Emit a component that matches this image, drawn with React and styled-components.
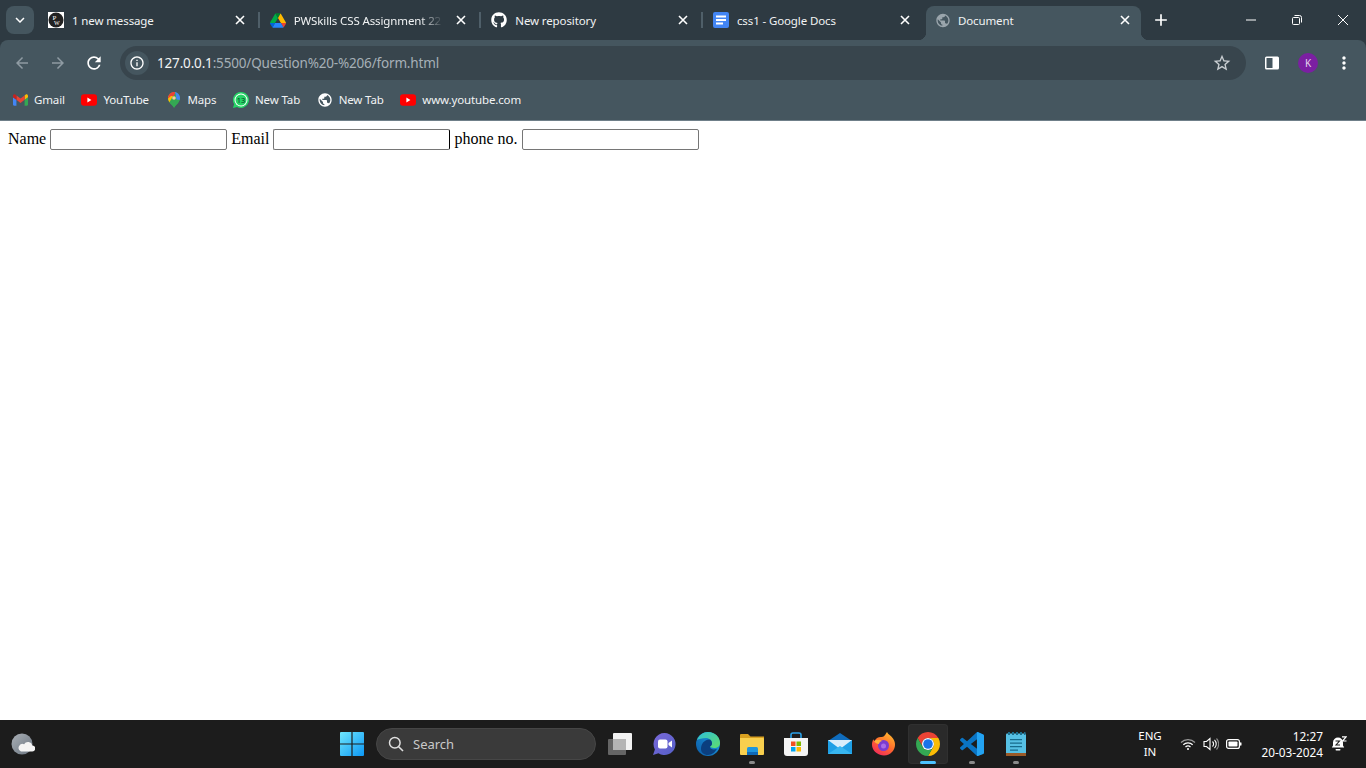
import React from "react";
import styled, { createGlobalStyle } from "styled-components";
import {
  MdArrowBack,
  MdArrowForward,
  MdRefresh,
  MdInfoOutline,
  MdStarBorder,
  MdMoreVert,
  MdKeyboardArrowDown,
  MdPublic,
  MdAdd,
} from "react-icons/md";
import { FaGithub } from "react-icons/fa";

const STRIP = "#2e3a42";
const TOOLBAR = "#45565f";
const UI_FONT = `"Noto Sans", "Open Sans", sans-serif`;

const GlobalStyle = createGlobalStyle`
  html, body {
    margin: 0;
    height: 100%;
    background: #fff;
    overflow: hidden;
  }
  #root {
    height: 100%;
  }
`;

const Screen = styled.div`
  display: flex;
  flex-direction: column;
  height: 768px;
`;

const BrowserFrame = styled.header`
  background: ${STRIP};
  font-family: ${UI_FONT};
  color: #f1f3f4;
`;

const TabStrip = styled.div`
  display: flex;
  height: 40px;
  padding-top: 6px;
  box-sizing: border-box;
`;

const TabSearch = styled.button`
  width: 28px;
  height: 28px;
  margin: 0 2px 0 6px;
  padding: 0;
  border: 0;
  border-radius: 8px;
  background: ${TOOLBAR};
  color: #fff;
  display: flex;
  align-items: center;
  justify-content: center;
`;

const Tab = styled.div`
  position: relative;
  display: flex;
  align-items: center;
  flex: none;
  box-sizing: border-box;
  width: ${(p) => (p.$active ? "215px" : "221.67px")};
  height: 34px;
  margin-left: ${(p) => (p.$active ? "3.3px" : "0")};
  padding: ${(p) => (p.$active ? "0 10px 6px 9px" : "0 12px 6px 12px")};
  border-radius: 8px 8px 0 0;
  background: ${(p) => (p.$active ? TOOLBAR : "transparent")};

  ${(p) =>
    p.$active
      ? `
    &::before, &::after {
      content: "";
      position: absolute;
      bottom: 0;
      width: 8px;
      height: 8px;
    }
    &::before {
      left: -8px;
      background: radial-gradient(circle at 0 0, transparent 8px, ${TOOLBAR} 8.5px);
    }
    &::after {
      right: -8px;
      background: radial-gradient(circle at 100% 0, transparent 8px, ${TOOLBAR} 8.5px);
    }
  `
      : ""}
`;

const TabDivider = styled.span`
  position: absolute;
  right: -2px;
  top: 6px;
  width: 2px;
  height: 16px;
  background: #4f5f69;
`;

const TabIcon = styled.span`
  flex: none;
  width: 16px;
  height: 16px;
  display: flex;
  align-items: center;
  justify-content: center;
  margin-right: ${(p) => (p.$active ? "7px" : "8px")};
`;

const TabTitle = styled.span`
  flex: 1;
  min-width: 0;
  overflow: hidden;
  white-space: nowrap;
  font-size: 11.5px;
  line-height: 16px;
  padding-top: 2px;
  letter-spacing: -0.12px;
  margin-right: 12px;
  ${(p) =>
    p.$fade
      ? `mask-image: linear-gradient(to right, #000 85%, transparent 100%);`
      : ""}
`;

const TabClose = styled.span`
  flex: none;
  width: 12px;
  height: 12px;
  display: flex;
`;

const NewTab = styled.button`
  width: 28px;
  height: 28px;
  margin-left: 6px;
  padding: 0;
  border: 0;
  background: none;
  color: #fff;
  display: flex;
  align-items: center;
  justify-content: center;
`;

const WindowControls = styled.div`
  display: flex;
  margin-left: auto;
  margin-top: -6px;
`;

const WindowButton = styled.span`
  width: 46px;
  height: 40px;
  display: flex;
  align-items: center;
  justify-content: center;
`;

const Toolbar = styled.div`
  display: flex;
  align-items: flex-start;
  height: 40px;
  box-sizing: border-box;
  padding: 6px 4px 0;
  background: ${TOOLBAR};
  border-radius: 8px 8px 0 0;
`;

const ToolButton = styled.span`
  flex: none;
  width: 36px;
  height: 34px;
  display: flex;
  align-items: center;
  justify-content: center;
  color: ${(p) => (p.$dim ? "#8f9ba3" : "#fff")};
`;

const UrlBar = styled.div`
  flex: 1;
  display: flex;
  align-items: center;
  height: 34px;
  margin: 0 8px;
  padding: 0 14px 0 5px;
  border-radius: 17px;
  background: #38454d;
`;

const SiteChip = styled.span`
  width: 24px;
  height: 24px;
  border-radius: 50%;
  margin-right: 8px;
  background: ${TOOLBAR};
  display: flex;
  align-items: center;
  justify-content: center;
  color: #fff;
`;

const UrlText = styled.span`
  font-size: 13.5px;
  letter-spacing: -0.17px;
  color: #a6b0b7;
  b {
    font-weight: 400;
    color: #f1f3f4;
  }
`;

const StarSlot = styled.span`
  margin-left: auto;
  display: flex;
  color: #c9ced2;
`;

const Avatar = styled.span`
  width: 20px;
  height: 20px;
  border-radius: 50%;
  background: #7b1fa2;
  color: #e6d5ee;
  font-size: 10px;
  line-height: 20px;
  text-align: center;
`;

const BookmarkBar = styled.nav`
  display: flex;
  align-items: center;
  box-sizing: border-box;
  height: 41px;
  padding-left: 4px;
  background: ${TOOLBAR};
  border-bottom: 1px solid #6f7f89;
`;

const Bookmark = styled.span`
  display: flex;
  align-items: center;
  padding: 0 8.6px 0 8px;
  font-size: 11.5px;
  letter-spacing: -0.14px;
  color: #f1f3f4;
`;

const BookmarkIcon = styled.span`
  flex: none;
  width: 16px;
  height: 16px;
  margin-right: 6px;
  display: flex;
  align-items: center;
  justify-content: center;
  color: #fff;
`;

const BookmarkLabel = styled.span`
  margin-top: -1px;
`;

const Page = styled.main`
  flex: 1;
  padding: 8px;
  background: #fff;
  color: #000;
  font-family: "Liberation Serif", "Times New Roman", serif;
  font-size: 16px;
`;

const Field = styled.input`
  box-sizing: border-box;
  width: 177px;
  height: 21px;
  padding: 1px 2px;
  border: 1px solid #767676;
  border-right-color: ${(p) => (p.$focusEdge ? "#000" : "#767676")};
  border-radius: 2px;
  background: #fff;
`;

const Taskbar = styled.footer`
  display: flex;
  align-items: center;
  flex: none;
  height: 48px;
  background: #1c1c1c;
  font-family: ${UI_FONT};
  color: #fff;
`;

const WeatherSlot = styled.div`
  flex: none;
  width: 340px;
  box-sizing: border-box;
  padding-left: 11px;
  display: flex;
`;

const StartSlot = styled.div`
  flex: none;
  width: 24px;
  margin-right: 12px;
  display: flex;
`;

const SearchBox = styled.div`
  flex: none;
  display: flex;
  align-items: center;
  box-sizing: border-box;
  width: 220px;
  height: 32px;
  margin-right: 2px;
  padding-left: 11px;
  border: 1px solid #464646;
  border-radius: 16px;
  background: #3a3a3a;
  color: #c9c9c9;
  font-size: 13px;
  gap: 9px;
`;

const Dock = styled.div`
  display: flex;
`;

const DockSlot = styled.div`
  position: relative;
  width: 44px;
  height: 48px;
  display: flex;
  align-items: center;
  justify-content: center;
`;

const DockTile = styled.div`
  width: 40px;
  height: 40px;
  display: flex;
  align-items: center;
  justify-content: center;
  border-radius: 4px;
  background: ${(p) => (p.$active ? "#2a2a2a" : "transparent")};
  box-shadow: ${(p) => (p.$active ? "inset 0 0 0 1px #303030" : "none")};
`;

const RunDot = styled.span`
  position: absolute;
  bottom: 4px;
  left: 50%;
  transform: translateX(-50%);
  height: 3px;
  width: ${(p) => (p.$active ? "16px" : "6px")};
  border-radius: 2px;
  background: ${(p) => (p.$active ? "#4cc2ff" : "#8a8a8a")};
`;

const Tray = styled.div`
  flex: none;
  display: flex;
  align-items: center;
  box-sizing: border-box;
  width: 236px;
  margin-left: auto;
  padding-right: 19px;
`;

const Lang = styled.div`
  width: 40px;
  margin-right: 10px;
  text-align: center;
  font-size: 11.5px;
  line-height: 16px;
`;

const TrayIcons = styled.div`
  display: flex;
  align-items: center;
  gap: 7px;
`;

const Clock = styled.div`
  margin-left: auto;
  text-align: right;
  font-size: 11.8px;
  line-height: 16px;
`;

const BellSlot = styled.div`
  margin-left: 8px;
  display: flex;
`;

const CloseGlyph = () => (
  <svg width="12" height="12" viewBox="0 0 12 12">
    <path d="M2 2l8 8M10 2l-8 8" stroke="#fff" strokeWidth="1.6" fill="none" />
  </svg>
);

const PwLogo = () => (
  <svg width="16" height="16" viewBox="0 0 16 16">
    <rect width="16" height="16" fill="#fff" />
    <circle cx="8" cy="8" r="7.5" fill="#222" />
    <text x="4.5" y="7.5" fontSize="7" fill="#fff" fontFamily="Liberation Serif">P</text>
    <text x="6" y="13.2" fontSize="6" fill="#fff" fontFamily="Liberation Serif">W</text>
  </svg>
);

const DriveLogo = () => (
  <svg width="16" height="15" viewBox="0 0 87.3 78">
    <path d="m6.6 66.85 3.85 6.65c.8 1.4 1.95 2.5 3.3 3.3l13.75-23.8h-27.5c0 1.55.4 3.1 1.2 4.5z" fill="#0066da" />
    <path d="m43.65 25-13.75-23.8c-1.35.8-2.5 1.9-3.3 3.3l-25.4 44a9.06 9.06 0 0 0 -1.2 4.5h27.5z" fill="#00ac47" />
    <path d="m73.55 76.8c1.35-.8 2.5-1.9 3.3-3.3l1.6-2.75 7.65-13.25c.8-1.4 1.2-2.95 1.2-4.5h-27.502l5.852 11.5z" fill="#ea4335" />
    <path d="m43.65 25 13.75-23.8c-1.35-.8-2.9-1.2-4.5-1.2h-18.5c-1.6 0-3.15.45-4.5 1.2z" fill="#00832d" />
    <path d="m59.8 53h-32.3l-13.75 23.8c1.35.8 2.9 1.2 4.5 1.2h50.8c1.6 0 3.15-.45 4.5-1.2z" fill="#2684fc" />
    <path d="m73.4 26.5-12.7-22c-.8-1.4-1.95-2.5-3.3-3.3l-13.75 23.8 16.15 28h27.45c0-1.55-.4-3.1-1.2-4.5z" fill="#ffba00" />
  </svg>
);

const DocsLogo = () => (
  <svg width="16" height="16" viewBox="0 0 16 16">
    <rect width="16" height="16" rx="2" fill="#4285f4" />
    <path d="M3 3.500h10v2H3zM3 7h10v2H3zM3 10.500h7v2H3z" fill="#fff" />
  </svg>
);

const GmailLogo = () => (
  <svg width="15" height="12" viewBox="52 42 88 66">
    <path fill="#4285f4" d="M58 108h14V74L52 59v43c0 3.32 2.69 6 6 6" />
    <path fill="#34a853" d="M120 108h14c3.32 0 6-2.69 6-6V59l-20 15" />
    <path fill="#fbbc04" d="M120 48v26l20-15v-8c0-7.42-8.47-11.65-14.4-7.2" />
    <path fill="#ea4335" d="M72 74V48l24 18 24-18v26L96 92" />
    <path fill="#c5221f" d="M52 51v8l20 15V48l-5.6-4.2c-5.94-4.45-14.4-.22-14.4 7.2" />
  </svg>
);

const YouTubeLogo = () => (
  <svg width="16" height="12" viewBox="0 0 16 12">
    <rect width="16" height="11.5" y="0.2" rx="3" fill="#f00" />
    <path d="M6.4 3.6v4.8L10.4 6z" fill="#fff" />
  </svg>
);

const MapsLogo = () => (
  <svg width="12" height="16" viewBox="0 0 12 16">
    <clipPath id="maps-pin">
      <path d="M6 0C2.7 0 0 2.700 0 6c0 1.600.6 3 1.400 4.200C2.800 12.200 5 13.600 6 16c1-2.400 3.200-3.800 4.600-5.800C11.400 9 12 7.600 12 6c0-3.300-2.700-6-6-6z" />
    </clipPath>
    <g clipPath="url(#maps-pin)">
      <rect width="12" height="16" fill="#34a853" />
      <path d="M0 4h5L1 11H0z" fill="#fbbc04" />
      <path d="M0 0h7.500L6 4H3L0 6.500z" fill="#ea4335" />
      <path d="M7 0h5v8H8.500L8 4z" fill="#4285f4" />
      <path d="M1 11l4-3.500h3.500l3.500.5-5 8z" fill="#34a853" />
    </g>
    <circle cx="6" cy="6" r="1.800" fill="#f1c9a0" />
  </svg>
);

const WhatsAppBadge = () => (
  <svg width="16" height="16" viewBox="0 0 16 16">
    <path d="M8 0a8 8 0 1 1-3.900 15L0 16l1.100-3.900A8 8 0 0 1 8 0z" fill="#25d366" />
    <circle cx="8" cy="8" r="6.500" fill="#fff" />
    <circle cx="8" cy="8" r="5.500" fill="#25d366" />
    <text x="8" y="10.800" textAnchor="middle" fontSize="7.500" fill="#07361c" fontFamily="Noto Sans">13</text>
  </svg>
);

const WeatherIcon = () => (
  <svg width="24" height="24" viewBox="0 0 24 24">
    <defs>
      <linearGradient id="moon" x1="0" y1="0" x2="1" y2="1">
        <stop offset="0" stopColor="#aab0b6" />
        <stop offset="1" stopColor="#6a7480" />
      </linearGradient>
    </defs>
    <circle cx="11" cy="12" r="10.500" fill="url(#moon)" />
    <path d="M10 19.500h11a3 3 0 0 0 .4-6 4.500 4.500 0 0 0-8.300-1.200A3.700 3.700 0 0 0 10 19.500z" fill="#f4f4f4" />
  </svg>
);

const WindowsLogo = () => (
  <svg width="24" height="24" viewBox="0 0 24 24">
    <defs>
      <linearGradient id="win" x1="0" y1="0" x2="1" y2="1">
        <stop offset="0" stopColor="#6fe6fc" />
        <stop offset="1" stopColor="#0c97f5" />
      </linearGradient>
    </defs>
    <path d="M0 1a1 1 0 0 1 1-1h10.400v11.400H0zM12.600 0H23a1 1 0 0 1 1 1v10.400H12.600zM0 12.600h11.400V24H1a1 1 0 0 1-1-1zM12.600 12.600H24V23a1 1 0 0 1-1 1H12.600z" fill="url(#win)" />
  </svg>
);

const SearchGlyph = () => (
  <svg width="16" height="16" viewBox="0 0 16 16">
    <circle cx="6.800" cy="6.800" r="5.300" stroke="#e0e0e0" strokeWidth="1.500" fill="none" />
    <path d="M10.700 10.700L15 15" stroke="#e0e0e0" strokeWidth="1.600" />
  </svg>
);

const TaskView = () => (
  <svg width="24" height="24" viewBox="0 0 24 24">
    <rect x="5" y="1" width="19" height="17" rx="1" fill="#f2f2f2" />
    <rect x="0" y="7" width="18" height="16" rx="1" fill="#6b6b6b" fillOpacity="0.92" />
    <rect x="5" y="7" width="13" height="11" fill="#b4b4b4" />
  </svg>
);

const MeetIcon = () => (
  <svg width="24" height="24" viewBox="0 0 24 24">
    <defs>
      <linearGradient id="meet" x1="0" y1="0" x2="1" y2="1">
        <stop offset="0" stopColor="#7a68d8" />
        <stop offset="1" stopColor="#5560c8" />
      </linearGradient>
    </defs>
    <path d="M12.500 1a11 11 0 1 1-6 20.200L1 23l1.900-5.600A11 11 0 0 1 12.500 1z" fill="url(#meet)" />
    <rect x="6" y="7.500" width="9.500" height="9" rx="2" fill="#fff" />
    <path d="M16.500 11l3.500-2.500v7L16.500 13z" fill="#fff" />
  </svg>
);

const EdgeIcon = () => (
  <svg width="24" height="24" viewBox="0 0 24 24">
    <defs>
      <linearGradient id="edge-a" x1="0" y1="1" x2="1" y2="0.2">
        <stop offset="0" stopColor="#0c59a4" />
        <stop offset="1" stopColor="#1b9de2" />
      </linearGradient>
      <linearGradient id="edge-b" x1="0" y1="0" x2="1" y2="1">
        <stop offset="0" stopColor="#2fc0d8" />
        <stop offset="1" stopColor="#5fdc6c" />
      </linearGradient>
    </defs>
    <circle cx="12" cy="12" r="12" fill="url(#edge-a)" />
    <path d="M1 8C3 3 7 0 12 0c7 0 12 5 12 11 0 3-2.500 5-6 5-2 0-3.500-.6-4-1.400 1.300-.8 2-2 2-3.300C16 8.500 13.500 6 10 6 6 6 3 7 1 8z" fill="url(#edge-b)" />
    <path d="M5 17c0-5 3-9 8-9.500 2 0 3 2 3 4 0 1.200-.7 2.300-2 3-.5 2 2 3 4 3 1 0 2-.2 3-.7-2 3.800-5.500 6.200-9 6.200-4 0-7-2.500-7-6z" fill="#0b3f7f" />
  </svg>
);

const ExplorerIcon = () => (
  <svg width="24" height="24" viewBox="0 0 24 24">
    <path d="M0 3a1 1 0 0 1 1-1h7l2.500 2.500H24V8H0z" fill="#d9a020" />
    <path d="M0 6h23a1 1 0 0 1 1 1v15a1 1 0 0 1-1 1H1a1 1 0 0 1-1-1z" fill="#f8cf4e" />
    <path d="M7 16.500a1.500 1.500 0 0 1 1.500-1.500h8a1.500 1.500 0 0 1 1.500 1.500V23H7z" fill="#1e96de" />
    <rect x="7" y="20" width="11" height="3" fill="#0e69b8" />
  </svg>
);

const StoreIcon = () => (
  <svg width="24" height="24" viewBox="0 0 24 24">
    <path d="M7 7V3a2 2 0 0 1 2-2h6a2 2 0 0 1 2 2v4" fill="none" stroke="#2aa0e8" strokeWidth="1.600" />
    <path d="M0 6h24v15a3 3 0 0 1-3 3H3a3 3 0 0 1-3-3z" fill="#f4f4f4" />
    <rect x="7" y="9.500" width="4.500" height="4.500" fill="#f25022" />
    <rect x="12.500" y="9.500" width="4.500" height="4.500" fill="#7fba00" />
    <rect x="7" y="15" width="4.500" height="4.500" fill="#00a4ef" />
    <rect x="12.500" y="15" width="4.500" height="4.500" fill="#ffb900" />
  </svg>
);

const MailIcon = () => (
  <svg width="24" height="24" viewBox="0 0 24 24">
    <path d="M0 9l12-8 12 8z" fill="#0f6cbd" />
    <rect y="8" width="24" height="14" fill="#1ea0e6" />
    <path d="M0 8h24l-12 9z" fill="#d8eefb" />
    <path d="M0 22l12-8 12 8z" fill="#38b6f0" />
  </svg>
);

const FirefoxIcon = () => (
  <svg width="24" height="24" viewBox="0 0 24 24">
    <defs>
      <linearGradient id="fx" x1="0.8" y1="0" x2="0.2" y2="1">
        <stop offset="0" stopColor="#ffbd2e" />
        <stop offset="0.5" stopColor="#ff6b2c" />
        <stop offset="1" stopColor="#f0265e" />
      </linearGradient>
    </defs>
    <path d="M15 0c1 2.500 4 3.500 6 6.500 3 4.500 2.500 9-.5 13-3 3.500-8 5-12.500 3.200C3 21 0 17 0 12.500c0-2 .6-4 1.500-5.300.2 1 .6 1.700 1 2.200C3.500 6.500 6 5 9 5c3 0 3.500-1 6-5z" fill="url(#fx)" />
    <circle cx="11.500" cy="13.500" r="5.500" fill="#7a3bd0" />
    <path d="M2 9c3-2 6-1.500 8 0-2 .5-3 2-3 3-2 0-4-1-5-3z" fill="#ffb13a" />
    <circle cx="11.500" cy="14" r="2.500" fill="#a86ae8" />
  </svg>
);

const ChromeIcon = () => (
  <svg width="24" height="24" viewBox="4 4 40 40">
    <path d="M24 14H41.320A20 20 0 0 0 6.680 14L15.340 29A10 10 0 0 1 24 14z" fill="#ea4335" />
    <path d="M24 14H41.320A20 20 0 0 1 24 44L32.660 29A10 10 0 0 0 24 14z" fill="#fbbc04" />
    <path d="M15.340 29L6.680 14A20 20 0 0 0 24 44L32.660 29A10 10 0 0 1 15.340 29z" fill="#34a853" />
    <circle cx="24" cy="24" r="10" fill="#fff" />
    <circle cx="24" cy="24" r="8" fill="#1a73e8" />
  </svg>
);

const VsCodeIcon = () => (
  <svg width="24" height="24" viewBox="0 0 24 24">
    <clipPath id="vs-right">
      <rect x="16.800" width="8" height="24" />
    </clipPath>
    <path d="M23.150 2.587L18.210.21a1.494 1.494 0 0 0-1.705.29l-9.460 8.630-4.120-3.128a.999.999 0 0 0-1.276.057L.327 7.261A1 1 0 0 0 .326 8.740L3.899 12 .326 15.260a1 1 0 0 0 .001 1.479L1.650 17.940a.999.999 0 0 0 1.276.057l4.120-3.128 9.460 8.630a1.492 1.492 0 0 0 1.704.29l4.942-2.377A1.500 1.500 0 0 0 24 20.060V3.939a1.500 1.500 0 0 0-.85-1.352zm-5.146 14.861L10.826 12l7.178-5.448v10.896z" fill="#0a74c4" />
    <path clipPath="url(#vs-right)" d="M23.150 2.587L18.210.21a1.494 1.494 0 0 0-1.705.29L16.800 24l1 0 5.400-2a1.500 1.500 0 0 0 .8-1.940V3.939a1.500 1.500 0 0 0-.85-1.352z" fill="#23a3f2" />
  </svg>
);

const NotepadIcon = () => (
  <svg width="22" height="24" viewBox="0 0 22 24">
    <rect x="1" y="1.500" width="20" height="22" rx="1" fill="#56c0e4" />
    <rect x="1" y="21" width="20" height="3" fill="#9a5a28" />
    <path d="M3 0h2v3H3zM7 0h2v3H7zM11 0h2v3h-2zM15 0h2v3h-2zM19 0h1.500v3H19z" fill="#1c6f8f" />
    <path d="M5 7h12v1.300H5zM5 10.500h12v1.300H5zM5 14h12v1.300H5zM5 17.500h8v1.300H5z" fill="#176b8c" />
  </svg>
);

const WifiIcon = () => (
  <svg width="16" height="16" viewBox="0 0 16 16" fill="none" stroke="#fff" strokeWidth="1.200">
    <path d="M1 6.500a10 10 0 0 1 14 0" stroke="#9a9a9a" />
    <path d="M3.300 8.800a6.800 6.800 0 0 1 9.400 0" />
    <path d="M5.500 11a3.600 3.600 0 0 1 5 0" />
    <circle cx="8" cy="13" r="1" fill="#fff" stroke="none" />
  </svg>
);

const VolumeIcon = () => (
  <svg width="16" height="16" viewBox="0 0 16 16" fill="none" stroke="#fff" strokeWidth="1.100">
    <path d="M1 5.500h2.500L7 2.500v11l-3.500-3H1z" />
    <path d="M9.500 5.500a3.500 3.500 0 0 1 0 5" />
    <path d="M11.500 3.800a6 6 0 0 1 0 8.400" />
    <path d="M13.500 2.500a8 8 0 0 1 0 11" stroke="#8a8a8a" />
  </svg>
);

const BatteryIcon = () => (
  <svg width="16" height="16" viewBox="0 0 16 16">
    <rect x="0.600" y="3.600" width="12.800" height="8.800" rx="2" fill="none" stroke="#fff" strokeWidth="1.200" />
    <rect x="2.500" y="5.500" width="9" height="5" rx="0.800" fill="#fff" />
    <rect x="14" y="6.200" width="1.500" height="3.600" rx="0.700" fill="#fff" />
  </svg>
);

const BellIcon = () => (
  <svg width="16" height="16" viewBox="0 0 16 16">
    <path d="M7 1.500a5 5 0 0 0-5 5v3L.8 11.500h12.400L12 9.500V6.500a5 5 0 0 0-5-5z" fill="#fff" />
    <rect x="4.500" y="13" width="5" height="1.500" rx="0.700" fill="#fff" />
    <path d="M4.500 5h4L5 9h4" stroke="#1c1c1c" strokeWidth="1.100" fill="none" />
    <path d="M11 .8h4.200L11.500 5h4" stroke="#fff" strokeWidth="1.200" fill="none" />
  </svg>
);

const tabs = [
  { id: "pw", icon: <PwLogo />, title: "1 new message" },
  { id: "drive", icon: <DriveLogo />, title: "PWSkills CSS Assignment 22 Feb", fade: true },
  { id: "github", icon: <FaGithub size={16} color="#fff" />, title: "New repository" },
  { id: "docs", icon: <DocsLogo />, title: "css1 - Google Docs" },
];

const bookmarks = [
  { icon: <GmailLogo />, label: "Gmail" },
  { icon: <YouTubeLogo />, label: "YouTube" },
  { icon: <MapsLogo />, label: "Maps" },
  { icon: <WhatsAppBadge />, label: "New Tab" },
  { icon: <MdPublic size={18} />, label: "New Tab" },
  { icon: <YouTubeLogo />, label: "www.youtube.com" },
];

const dockApps = [
  { id: "taskview", icon: <TaskView /> },
  { id: "meet", icon: <MeetIcon /> },
  { id: "edge", icon: <EdgeIcon /> },
  { id: "explorer", icon: <ExplorerIcon />, running: true },
  { id: "store", icon: <StoreIcon /> },
  { id: "mail", icon: <MailIcon /> },
  { id: "firefox", icon: <FirefoxIcon /> },
  { id: "chrome", icon: <ChromeIcon />, active: true },
  { id: "vscode", icon: <VsCodeIcon />, running: true },
  { id: "notepad", icon: <NotepadIcon />, running: true },
];

const App = () => {
  return (
    <Screen>
      <GlobalStyle />
      <BrowserFrame>
        <TabStrip>
          <TabSearch>
            <MdKeyboardArrowDown size={18} />
          </TabSearch>
          {tabs.map((tab) => (
            <Tab key={tab.id}>
              <TabIcon>{tab.icon}</TabIcon>
              <TabTitle $fade={tab.fade}>{tab.title}</TabTitle>
              <TabClose>
                <CloseGlyph />
              </TabClose>
              {tab.id !== "docs" && <TabDivider />}
            </Tab>
          ))}
          <Tab $active>
            <TabIcon $active>
              <MdPublic size={17} color="#9aa5ac" />
            </TabIcon>
            <TabTitle>Document</TabTitle>
            <TabClose>
              <CloseGlyph />
            </TabClose>
          </Tab>
          <NewTab>
            <MdAdd size={20} />
          </NewTab>
          <WindowControls>
            <WindowButton>
              <svg width="12" height="12" viewBox="0 0 12 12">
                <path d="M1 6h10" stroke="#fff" strokeWidth="1" />
              </svg>
            </WindowButton>
            <WindowButton>
              <svg width="12" height="12" viewBox="0 0 12 12" fill="none" stroke="#fff">
                <rect x="1.500" y="3.500" width="7" height="7" rx="1" />
                <path d="M3.500 1.500h5a2 2 0 0 1 2 2v5" />
              </svg>
            </WindowButton>
            <WindowButton>
              <svg width="12" height="12" viewBox="0 0 12 12">
                <path d="M1 1l10 10M11 1L1 11" stroke="#fff" strokeWidth="1" />
              </svg>
            </WindowButton>
          </WindowControls>
        </TabStrip>

        <Toolbar>
          <ToolButton $dim>
            <MdArrowBack size={18} />
          </ToolButton>
          <ToolButton $dim>
            <MdArrowForward size={18} />
          </ToolButton>
          <ToolButton>
            <MdRefresh size={20} />
          </ToolButton>
          <UrlBar>
            <SiteChip>
              <MdInfoOutline size={16} />
            </SiteChip>
            <UrlText>
              <b>127.0.0.1</b>:5500/Question%20-%206/form.html
            </UrlText>
            <StarSlot>
              <MdStarBorder size={20} />
            </StarSlot>
          </UrlBar>
          <ToolButton>
            <svg width="16" height="16" viewBox="0 0 16 16">
              <rect x="1" y="1.500" width="14" height="13" rx="1.500" fill="#fff" />
              <rect x="2.500" y="3" width="6" height="10" fill={TOOLBAR} />
            </svg>
          </ToolButton>
          <ToolButton>
            <Avatar>K</Avatar>
          </ToolButton>
          <ToolButton>
            <MdMoreVert size={20} />
          </ToolButton>
        </Toolbar>

        <BookmarkBar>
          {bookmarks.map((item, i) => (
            <Bookmark key={i}>
              <BookmarkIcon>{item.icon}</BookmarkIcon>
              <BookmarkLabel>{item.label}</BookmarkLabel>
            </Bookmark>
          ))}
        </BookmarkBar>
      </BrowserFrame>

      <Page>
        <form>
          Name <Field type="text" /> Email <Field type="text" $focusEdge /> phone no. <Field type="text" />
        </form>
      </Page>

      <Taskbar>
        <WeatherSlot>
          <WeatherIcon />
        </WeatherSlot>
        <StartSlot>
          <WindowsLogo />
        </StartSlot>
        <SearchBox>
          <SearchGlyph />
          Search
        </SearchBox>
        <Dock>
          {dockApps.map((app) => (
            <DockSlot key={app.id}>
              <DockTile $active={app.active}>{app.icon}</DockTile>
              {(app.running || app.active) && <RunDot $active={app.active} />}
            </DockSlot>
          ))}
        </Dock>
        <Tray>
          <Lang>
            ENG
            <br />
            IN
          </Lang>
          <TrayIcons>
            <WifiIcon />
            <VolumeIcon />
            <BatteryIcon />
          </TrayIcons>
          <Clock>
            12:27
            <br />
            20-03-2024
          </Clock>
          <BellSlot>
            <BellIcon />
          </BellSlot>
        </Tray>
      </Taskbar>
    </Screen>
  );
};

export default App;
